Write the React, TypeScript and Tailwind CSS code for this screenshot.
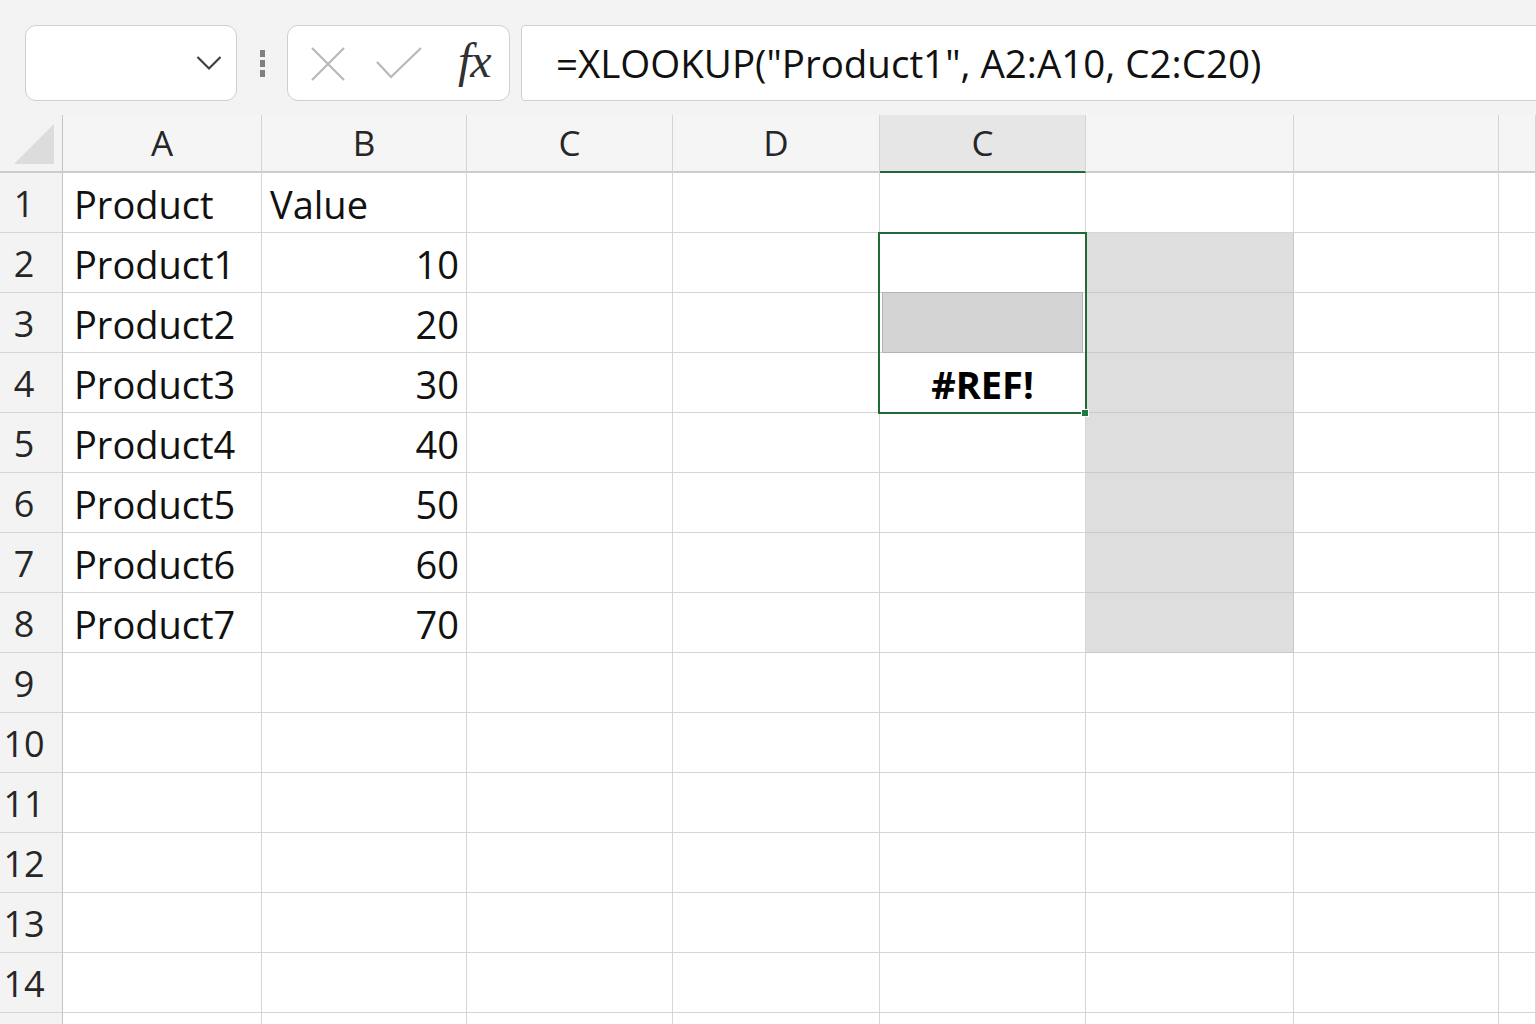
const cols = ['A', 'B', 'C', 'D', 'C', '', '', '']

const data: Record<number, [string, string]> = {
  1: ['Product', 'Value'],
  2: ['Product1', '10'],
  3: ['Product2', '20'],
  4: ['Product3', '30'],
  5: ['Product4', '40'],
  6: ['Product5', '50'],
  7: ['Product6', '60'],
  8: ['Product7', '70'],
}

const rows = Array.from({ length: 15 }, (_, i) => i + 1)

function Toolbar() {
  return (
    <div className="h-[115px] bg-[#f3f3f3] flex items-start pt-[25px] pl-[25px]">
      <div className="w-[212px] h-[76px] bg-white border border-[#cfcfcf] rounded-[11px] flex items-center justify-end pr-[14px]">
        <svg width="26" height="16" viewBox="0 0 26 16">
          <path d="M1.5 2 L13 13.5 L24.5 2" stroke="#404040" strokeWidth="2.2" fill="none" />
        </svg>
      </div>
      <div className="w-[50px] h-[76px] flex flex-col items-center justify-center gap-[3px]">
        <div className="w-[5px] h-[7px] bg-[#808080]" />
        <div className="w-[5px] h-[7px] bg-[#808080]" />
        <div className="w-[5px] h-[7px] bg-[#808080]" />
      </div>
      <div className="w-[223px] h-[76px] bg-white border border-[#cfcfcf] rounded-[11px] flex items-center pl-[22px]">
        <svg width="36" height="36" viewBox="0 0 36 36" className="mt-[2px]">
          <path d="M2 2 L34 34 M34 2 L2 34" stroke="#b8b8b8" strokeWidth="2.2" fill="none" />
        </svg>
        <svg width="46" height="32" viewBox="0 0 46 32" className="ml-[30px]">
          <path d="M1 15 L15 30 L45 1" stroke="#b8b8b8" strokeWidth="2.2" fill="none" />
        </svg>
        <span className="ml-[36px] text-[48px] italic text-[#303030] leading-none -mt-[4px] tracking-[-1px]" style={{ fontFamily: '"Liberation Serif", serif' }}>
          fx
        </span>
      </div>
      <div className="flex-1 ml-[11px] -mr-[12px] h-[76px] bg-white border border-[#cfcfcf] rounded-l-[4px] flex items-center pl-[34px]">
        <span className="text-[38.5px] text-[#111] leading-none" style={{ fontFamily: '"Open Sans", sans-serif' }}>
          =XLOOKUP("Product1", A2:A10, C2:C20)
        </span>
      </div>
    </div>
  )
}

function HeaderRow() {
  return (
    <>
      <div className="h-[58px] bg-[#f3f3f3] border-r border-[#c4c4c4] border-b-2 border-b-[#cccccc] flex items-end justify-end pr-[8px] pb-[7px]">
        <svg width="40" height="40" viewBox="0 0 40 40">
          <polygon points="40,0 40,40 0,40" fill="#dcdcdc" />
        </svg>
      </div>
      {cols.map((c, i) => (
        <div
          key={i}
          className={
            i === 4
              ? 'h-[58px] bg-[#e6e6e6] border-r border-[#d4d4d4] border-b-2 border-b-[#1e6b35] flex items-center justify-center text-[35px] text-[#262626]'
              : 'h-[58px] bg-[#f5f5f5] border-r border-[#d4d4d4] border-b-2 border-b-[#cccccc] flex items-center justify-center text-[35px] text-[#262626]'
          }
        >
          {c}
        </div>
      ))}
    </>
  )
}

function Cell({ row, col }: { row: number; col: number }) {
  const gray = col === 5 && row >= 2 && row <= 8
  const base = 'h-[60px] border-r border-b border-[#d6d6d6] flex items-center pt-[3px] text-[38px] text-[#111] '
  if (col === 0) {
    return <div className={base + 'pl-[11px] whitespace-nowrap'}>{data[row]?.[0] ?? ''}</div>
  }
  if (col === 1) {
    return (
      <div className={base + (row === 1 ? 'pl-[8px]' : 'justify-end pr-[7px]')}>{data[row]?.[1] ?? ''}</div>
    )
  }
  if (col === 4 && row === 3) {
    return (
      <div className="h-[60px] border-r border-b border-[#d6d6d6] px-[2px]">
        <div className="w-full h-[61px] -mt-[1px] bg-[#d4d4d4] border border-[#b4b4b4]" />
      </div>
    )
  }
  if (col === 4 && row === 4) {
    return <div className={base + 'justify-center font-bold text-black'}>#REF!</div>
  }
  return <div className={gray ? 'h-[60px] border-r border-b border-[#c9c9c9] bg-[#dedede]' : 'h-[60px] border-r border-b border-[#d6d6d6]'} />
}

export default function App() {
  return (
    <div className="w-[1536px] h-[1024px] overflow-hidden bg-white" style={{ fontFamily: '"Open Sans", "Noto Sans", sans-serif' }}>
      <Toolbar />
      <div className="relative">
        <div className="grid grid-cols-[63px_199px_205px_206px_207px_206px_208px_205px_1fr]">
          <HeaderRow />
          {rows.map((r) => (
            <div key={r} className="contents">
              <div className="h-[60px] bg-[#f3f3f3] border-r border-r-[#c4c4c4] border-b border-[#d6d6d6] flex items-center pt-[3px] text-[36px] text-[#262626]">
                <span className="w-[48px] text-center">{r}</span>
              </div>
              {cols.map((_, c) => (
                <Cell key={c} row={r} col={c} />
              ))}
            </div>
          ))}
        </div>
        <div className="absolute left-[878px] top-[117px] w-[209px] h-[182px] border-2 border-[#1e6b35] pointer-events-none" />
        <div className="absolute left-[1081px] top-[294px] w-[8px] h-[8px] bg-[#1e7a3e] border border-white" />
      </div>
    </div>
  )
}
